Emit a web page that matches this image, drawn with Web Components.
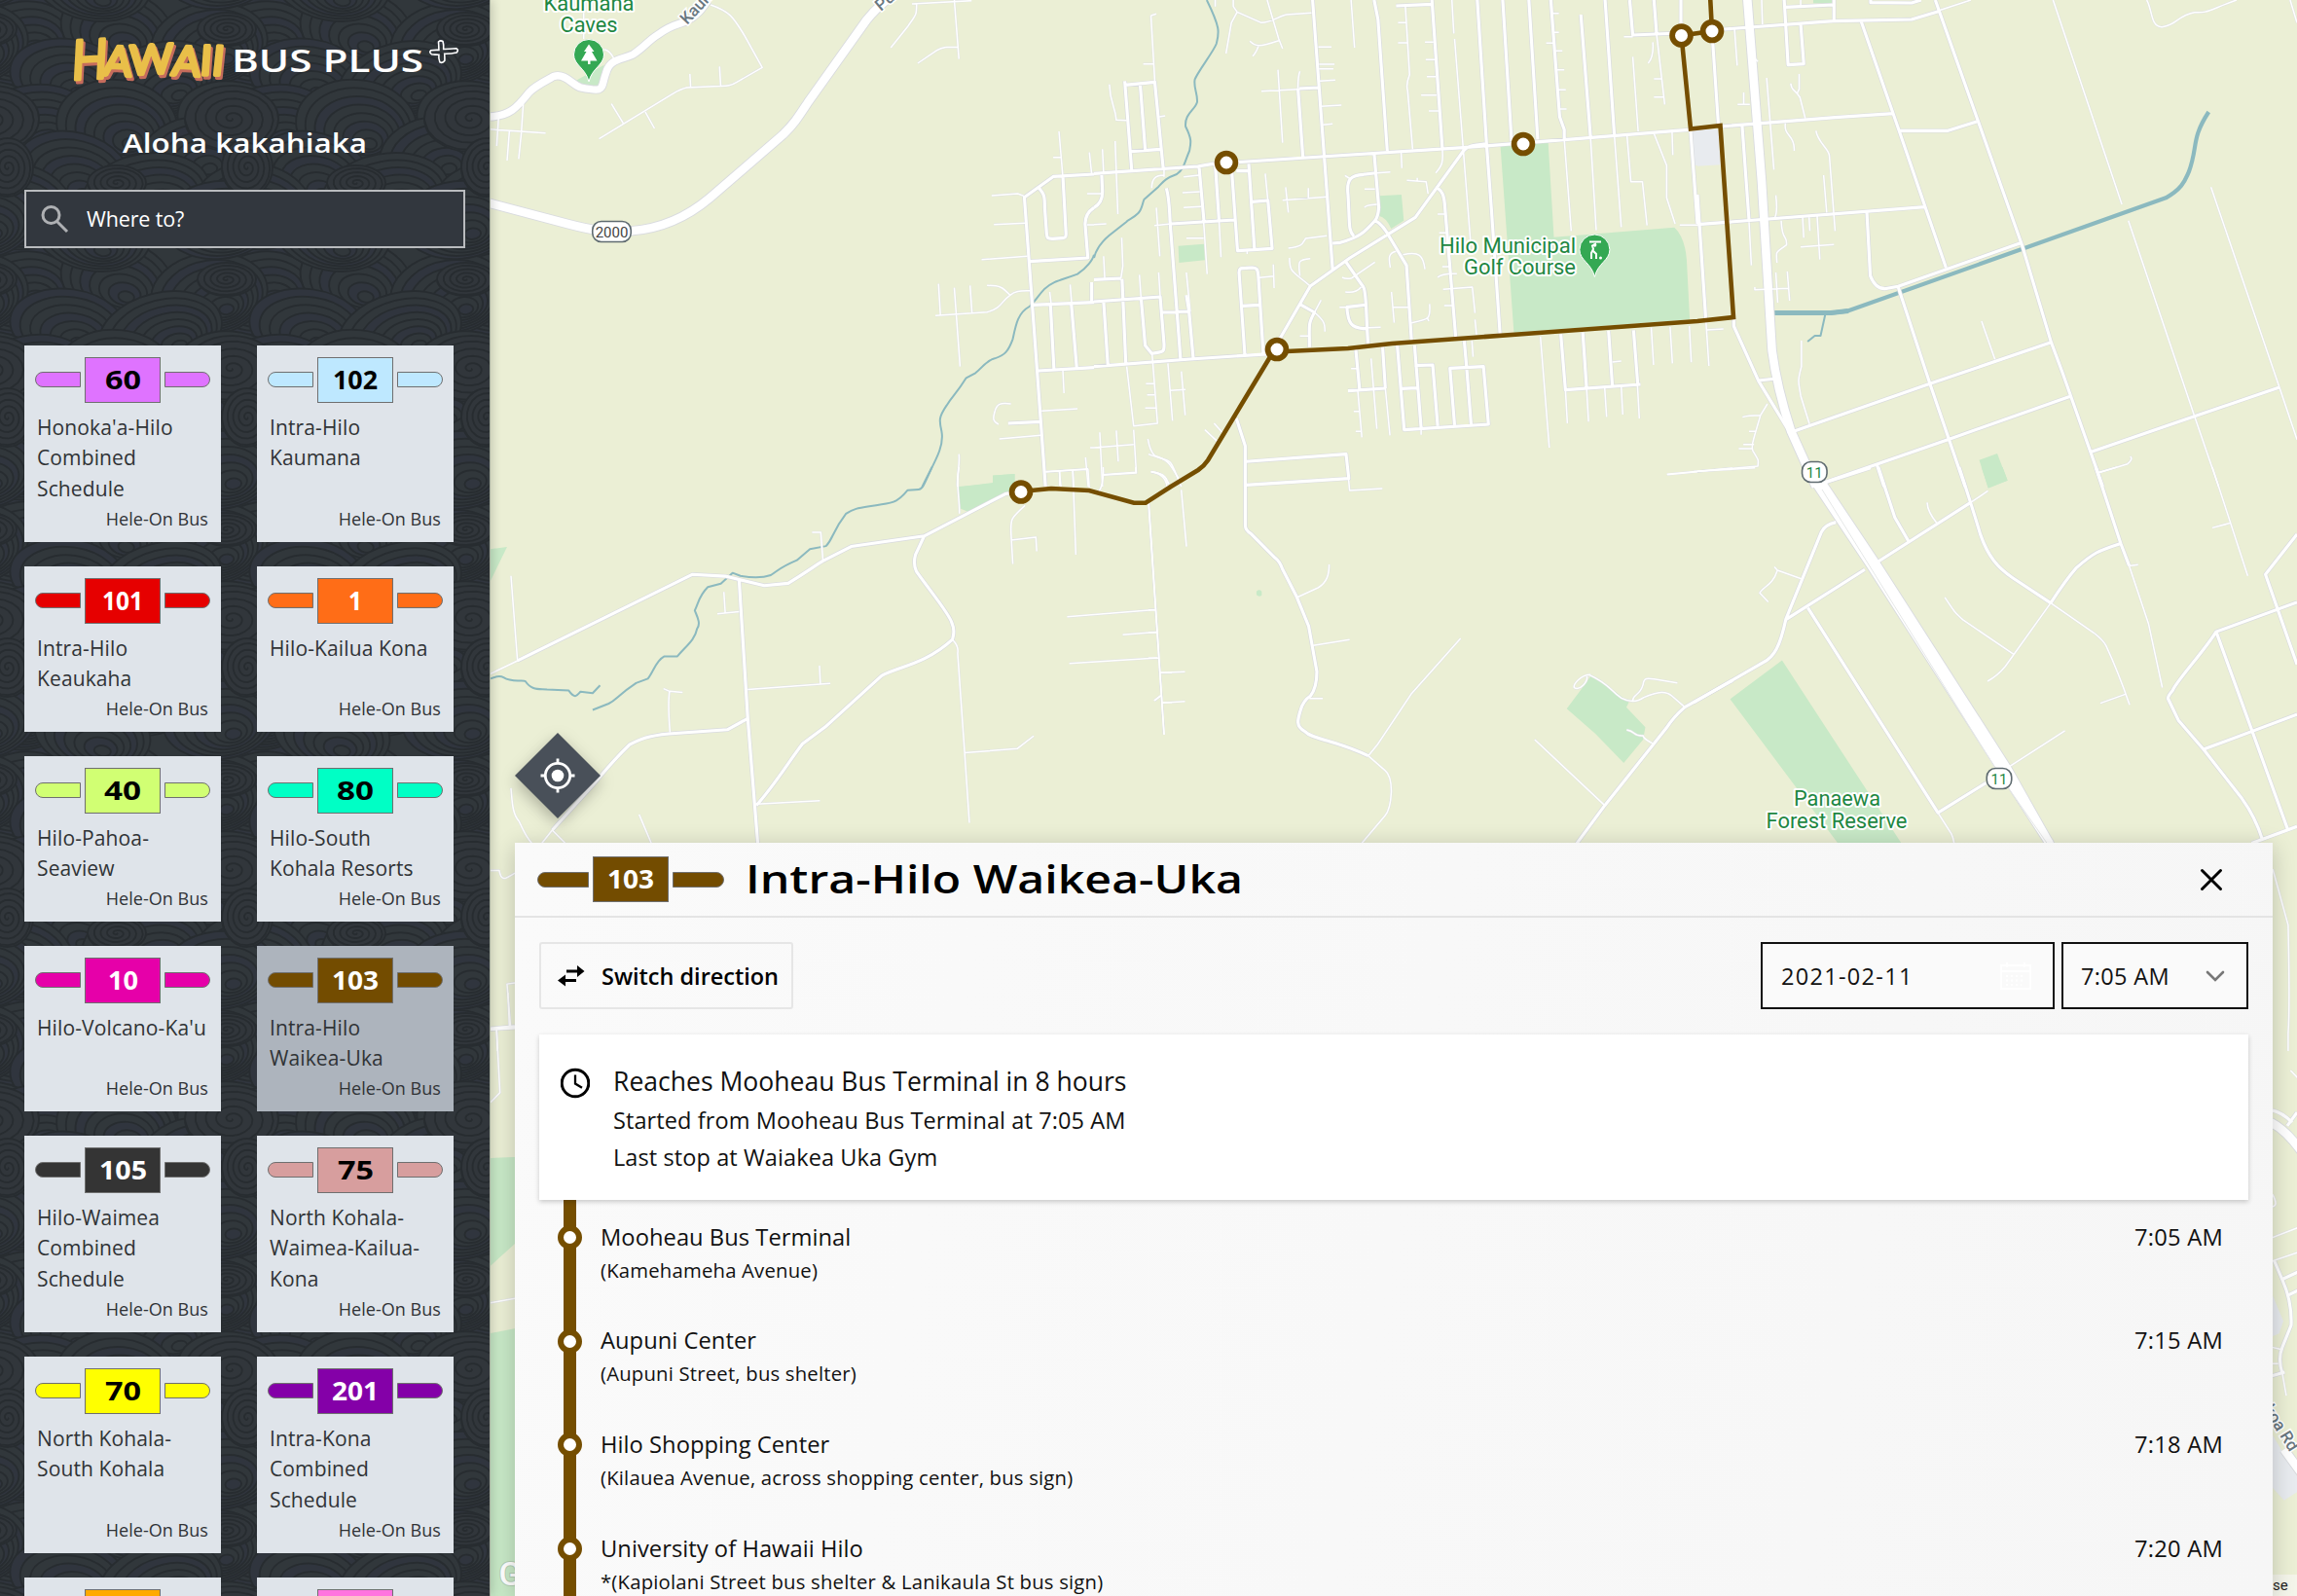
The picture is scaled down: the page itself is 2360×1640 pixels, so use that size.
<!DOCTYPE html>
<html lang="en">
<head>
<meta charset="utf-8">
<title>Hawaii Bus Plus</title>
<style>
html,body{margin:0;height:1640px;overflow:hidden}
body{font-family:"Open Sans","Noto Sans",sans-serif;color:#111}
</style>
</head>
<body>
<bus-app></bus-app>
<script>
const define=(name,render)=>customElements.define(name,class extends HTMLElement{
  connectedCallback(){
    if(this.shadowRoot)return;
    this.attachShadow({mode:'open'}).innerHTML=render(this);
  }
});
const attr=(el,n,d='')=>el.getAttribute(n)??d;

/* Display lettering: a text run widened to a given advance. The box is its cap height. */
define('wide-text',el=>{
  const s=+attr(el,'size',26),w=+attr(el,'w',100),h=(s*.714).toFixed(1);
  return `<style>:host{display:block;line-height:0;flex:none}svg{display:block;overflow:visible}</style>
  <svg width="${w}" height="${h}"><text x="0" y="${h}" textLength="${w}" lengthAdjust="spacingAndGlyphs" font-family="Open Sans,Noto Sans,sans-serif" font-size="${s}" font-weight="${attr(el,'weight','650')}" fill="currentColor">${attr(el,'text')}</text></svg>`;
});

define('route-badge',el=>`
<style>
:host{display:flex;align-items:center;gap:4px;color:${attr(el,'ink','#fff')}}
i{flex:1;box-sizing:border-box;height:16px;background:${attr(el,'color')};border:1.5px solid #6f6f6f}
i:first-of-type{border-radius:8px 0 0 8px}
i:last-of-type{border-radius:0 8px 8px 0}
b{box-sizing:border-box;width:78px;height:47px;background:${attr(el,'color')};border:1.5px solid #6f6f6f;display:flex;align-items:center;justify-content:center}
</style><i></i><b>${attr(el,'num')?`<wide-text text="${attr(el,'num')}" w="${attr(el,'w')}" size="27" weight="700"></wide-text>`:''}</b><i></i>`);

define('route-card',el=>`
<style>
:host{box-sizing:border-box;display:flex;flex-direction:column;padding:12px 11px 11px;background:${el.hasAttribute('active')?'#adb4bd':'#dfe4ea'};color:#303336}
.name{margin:10px 0 0 2px;font-size:21px;line-height:31.35px;white-space:nowrap;letter-spacing:.12px}
.agency{margin:auto 2px 0 0;text-align:right;font-size:18px;line-height:26px;letter-spacing:.05px}
</style>
<route-badge color="${attr(el,'color')}" ink="${attr(el,'ink','#fff')}" num="${attr(el,'num')}" w="${attr(el,'w')}"></route-badge>
<div class="name"><slot></slot></div><div class="agency">Hele-On Bus</div>`);

/* Seamless wave pattern built from overlapping ringed humps. */
function waves(){
  const W=246,H=257,humps=[
    [20,40,62,46,-10,8],[120,30,58,40,12,7],[215,45,60,42,-8,8],[70,78,60,38,8,7],[165,84,64,40,-14,8],
    [240,124,58,40,10,7],[30,132,66,44,-12,8],[120,128,62,46,6,8],[200,160,56,40,-8,7],[75,178,60,42,14,8],
    [150,200,66,42,-10,8],[15,212,60,44,8,8],[225,226,58,40,-6,7],[95,240,60,38,10,7]];
  const spirals=[[233,30,30,17],[238,122,48,34],[8,172,26,30],[120,188,30,18]];
  let out='';
  const put=(x,y,f)=>{for(const dx of[-W,0,W])for(const dy of[-H,0,H])out+=`<g transform="translate(${x+dx} ${y+dy})">${f}</g>`};
  humps.forEach(([x,y,a,b,r,n],k)=>{
    let f='';
    for(let i=0;i<n;i++){const q=1-i/n;f+=`<ellipse cx="${(i*2.2).toFixed(1)}" cy="${(i*2.6).toFixed(1)}" rx="${(a*q).toFixed(1)}" ry="${(b*q).toFixed(1)}" fill="${(i+k)%3?'#31373b':'#30353e'}"/>`}
    put(x,y,`<g transform="rotate(${r})">${f}</g>`);
  });
  spirals.forEach(([x,y,a,b])=>{
    let d='M0 0';
    for(let t=.3;t<Math.PI*9;t+=.3){const q=t/(Math.PI*9);d+=`L${(a*q*Math.cos(t)).toFixed(1)} ${(b*q*Math.sin(t)).toFixed(1)}`}
    put(x,y,`<ellipse rx="${a}" ry="${b}" fill="#31363b"/><path d="${d}" fill="none"/>`);
  });
  return `<svg class="bg" width="503" height="1640"><defs><pattern id="w" width="${W}" height="${H}" patternUnits="userSpaceOnUse"><rect width="${W}" height="${H}" fill="#31373b"/><g stroke="#272c30" stroke-width="2">${out}</g></pattern></defs><rect width="503" height="1640" fill="url(#w)"/></svg>`;
}

define('bus-logo',()=>`
<style>:host{display:block;height:60px}svg{display:block;overflow:visible}.brush{filter:drop-shadow(2px 3px 0 #c66c5c)}</style>
<svg width="503" height="60" viewBox="0 33 503 60">
<g class="brush" font-family="Lato,Open Sans,sans-serif" font-weight="400" fill="#e9bf49" stroke="#e9bf49" stroke-width="3.600" stroke-linejoin="round" stroke-linecap="round"><text transform="translate(73 82) rotate(-3) skewX(-6) scale(.86 1)" font-size="56">H</text><text transform="translate(105 77) skewX(-4)" font-size="42" textLength="124" lengthAdjust="spacingAndGlyphs" rotate="3 -3 3 0 2">AWAII</text></g>
<text x="238" y="74" font-family="Open Sans,Noto Sans,sans-serif" font-size="32" font-weight="650" fill="#fff" textLength="197" lengthAdjust="spacingAndGlyphs">BUS PLUS</text>
<path d="M450.500 43q2-2 4.500-.5q1 3 .7 8q6 0 13-.8q3 1.500.5 4.300q-6 1.500-12.500 1.300q.3 4 .2 7q-2 3-5 1.500q-1.500-3-1-7.600q-4 0-7.500-.5q-3-2-.5-4q4-.5 8-.3q0-4-.4-8.400z" fill="none" stroke="#fff" stroke-width="1.600"/>
</svg>`);

const routes=[
["60","#df73ff","#000",37,"Honoka'a-Hilo<br>Combined<br>Schedule"],
["102","#bee8ff","#000",46,"Intra-Hilo<br>Kaumana"],
["101","#e60000","#fff",42,"Intra-Hilo<br>Keaukaha"],
["1","#ff6d17","#fff",14,"Hilo-Kailua Kona"],
["40","#d1ff73","#000",38,"Hilo-Pahoa-<br>Seaview"],
["80","#00ffc5","#000",38,"Hilo-South<br>Kohala Resorts"],
["10","#e600a9","#fff",31,"Hilo-Volcano-Ka'u"],
["103","#734c00","#fff",48,"Intra-Hilo<br>Waikea-Uka"],
["105","#343434","#fff",49,"Hilo-Waimea<br>Combined<br>Schedule"],
["75","#d79e9e","#000",37,"North Kohala-<br>Waimea-Kailua-<br>Kona"],
["70","#ffff00","#000",37,"North Kohala-<br>South Kohala"],
["201","#8400a8","#fff",48,"Intra-Kona<br>Combined<br>Schedule"],
["","#ffaa00","#000",0,""],["","#ff73df","#000",0,""]];

define('side-bar',()=>`
<style>
:host{display:grid;height:1640px;overflow:hidden;background:#31373b;box-shadow:1px 0 0 #a9b1a0,2px 0 10px #0003;z-index:2}
.bg,.col{grid-area:1/1}
.col{display:flex;flex-direction:column;padding-top:33px}
.hi{display:flex;justify-content:center;color:#fff;padding:45px 0 37.700px}
.search{box-sizing:border-box;margin:0 25px 100px;width:453px;height:60px;flex:none;border:2px solid #b9bbbe;background:#32373e;color:#fff;display:flex;align-items:center;padding-left:14px;gap:18px;font-size:21.500px;letter-spacing:-.15px}
.grid{display:grid;grid-template-columns:202px 202px;grid-template-rows:202px 170px 170px 170px 202px 202px 170px;column-gap:37px;row-gap:25px;padding-left:25px}
.search svg{display:block}
</style>${waves()}
<div class="col"><bus-logo></bus-logo>
<div class="hi"><wide-text text="Aloha kakahiaka" w="251" size="27"></wide-text></div>
<div class="search"><svg width="30" height="30" viewBox="0 0 30 30" fill="none" stroke="#aeb0b3" stroke-width="3"><circle cx="11.500" cy="11" r="8.500"/><path d="M17.500 17.500L28 28"/></svg><span>Where to?</span></div>
<div class="grid">${routes.map(r=>`<route-card num="${r[0]}" color="${r[1]}" ink="${r[2]}" w="${r[3]}" ${r[0]=='103'?'active':''}>${r[4]}</route-card>`).join('')}</div></div>`);

/* Map tiles: each has its own origin and unit scale; s = lanes, m = streets, l = main roads, h = highways, r = rivers. */
const tiles=[
{t:'translate(504 0) scale(.39541 .33333)',
 p:'M220 250L295 200L290 268L245 270ZM1228 1500L1305 1488V1466L1362 1461V1500Z',
 l:'M-10 360C50 360 70 330 100 285C115 265 150 245 165 235C195 225 215 265 235 270C300 285 285 275 300 225C310 180 340 185 370 168C400 145 410 125 435 107C470 75 490 75 510 65C540 45 550 25 565 0',
 h:'M-10 624L200 690C270 712 310 718 365 712C450 705 520 660 570 610L760 415C790 380 800 360 825 315L975 65C985 50 1000 25 1050 -20',
 m:'M1568 537L1463 544L1387 608L1420 1140L1442 1500M1423 577C1440 600 1440 605 1440 640L1445 720C1446 735 1448 736 1460 736L1485 734C1495 733 1496 730 1495 715L1487 542M1400 806L1552 795L1545 690C1545 665 1555 650 1568 640M1408 940L1568 932M1455 940L1464 1138M1509 936L1523 1133M1423 1143L1568 1133M1345 1305L1430 1300M1562 930V870',
 s:'M572 15C620 35 630 50 660 110L706 208L640 253C620 268 610 264 580 266L510 270C490 275 480 285 465 295L282 428M518 228L520 270M595 205L598 264M314 320L346 382M402 345L426 396M295 152Q310 155 320 180M242 40V120M1095 12L1250 2M1107 12C1107 50 1105 45 1085 80L1040 147M1205 0L1217 182M1215 145C1180 145 1175 145 1160 155L1110 195M-10 398L50 403L143 410M21 360L16 450M85 320L80 410L73 490M49 403L43 495M1477 405L1487 545M1462 485H1483M1556 470L1562 537M1302 603L1370 597L1387 605M1308 692L1390 688M1276 800L1395 790M1164 875L1169 973M1205 887L1220 1130M1246 880L1251 965M1156 973L1290 962C1330 950 1325 930 1350 910C1365 895 1380 897 1403 896M1290 880C1325 880 1330 885 1350 910M1453 900L1457 940M1506 877L1510 935M1487 1140L1490 1212M1352 1245C1325 1240 1315 1245 1310 1270C1305 1290 1305 1300 1320 1308M1432 1267L1525 1260M1322 1353L1430 1342M1442 1455L1553 1445M1478 1453L1482 1500M1513 1450L1515 1500M1546 1410L1553 1500M1217 1400C1220 1430 1212 1460 1213 1500M1550 597H1568M1550 693H1568M1558 1380H1568',
 r:'M1568 785C1565 800 1550 825 1525 845C1480 865 1465 865 1440 890C1420 915 1415 930 1400 945C1370 965 1365 1000 1357 1045C1345 1085 1335 1095 1310 1105C1290 1110 1280 1130 1260 1150L1236 1165C1210 1215 1200 1220 1185 1250C1165 1285 1165 1295 1172 1330C1180 1380 1150 1430 1122 1500'},
{t:'translate(1124 0) scale(.39541 .33333)',
 p:'M1056 449L1180 436L1195 731L1508 701Q1535 730 1540 800L1548 985L1091 1025ZM740 604L799 600L805 680L772 705Q760 670 740 665ZM219 758L286 752L288 802L221 810Z',
 g:'M1553 400H1568V510H1558Z',
 m:'M0 535L270 513C290 508 310 503 345 502L590 483L960 455L1230 430L1568 398M0 1130L250 1107L470 1090M480 1050L562 882L665 795L835 670L960 465C970 450 985 448 1020 443M568 0L620 830M728 0L738 60L762 465M878 0L905 455M996 0L1020 443L1033 650L1055 1030M1062 0L1085 435M1130 0L1153 430M1328 0L1352 415M1265 45L1290 420M1187 0L1210 360L1222 400V430M1392 0L1400 108L1520 102M1455 0L1462 107M1525 0V90M1550 400L1568 690M80 262L158 253L180 520M80 250L98 525M95 467L173 460M120 260L133 462M530 272L543 485M533 273L583 270M785 18L878 13M200 690L365 678M273 513L286 685M315 505L325 682M357 510L373 773L463 766L452 618L411 622M402 505L417 770M370 527L402 526M728 472L740 640Q738 670 730 680C700 720 690 730 640 748L620 750M675 728C660 710 665 690 660 600C655 550 670 540 700 538L733 533M730 680C750 690 760 715 770 735L812 818L825 1050M890 577C905 590 910 600 912 640L940 1040M655 808L700 885C708 900 706 950 712 1060M655 947L706 940M657 945C660 1000 670 1010 700 1013L712 1012M535 938L573 963C555 1000 560 1005 560 1070M392 1095L377 840C377 828 380 826 395 826L410 825C425 826 425 830 427 850L440 1090M386 943L430 940M188 580C198 620 195 660 200 720L225 1110M0 930L172 915L182 1060C183 1085 182 1085 150 1090L133 1065L122 915M25 930L36 1125M73 860L83 1128M0 862L70 858M177 963L247 960L258 1105M247 960L240 910M680 1075L690 1200M660 1205L757 1197M750 1070L757 1197M788 1065L806 1325L1025 1308L1012 1130L925 1135L937 1310M833 1065L850 1320M833 1127L880 1125L893 1313M800 1198L838 1196M962 1050L968 1130L980 1310M1213 1030L1225 1202L1420 1185M1270 1025L1280 1198M1337 1020L1347 1190M1402 1018L1413 1185M370 1290L393 1375V1500M395 1423L655 1400L662 1475L395 1495M395 1498V1500M20 540L22 590Q22 625 0 640',
 s:'M148 48L158 250M148 48L162 43M128 197H156M40 260C42 320 55 325 58 370L85 371M55 435L62 660M22 460L25 535M182 520V545M150 580C150 550 160 540 182 540M72 733L75 820L70 858M25 790L28 860M118 847L122 915M168 840L172 915M240 840L250 960M362 0V20L372 37L357 70L343 165M372 37L435 70C460 70 480 50 500 45L565 40M450 0L480 120L490 150M480 125C430 145 420 145 405 127M427 143Q420 165 412 173M583 145H617M585 198H625M585 212H622M587 250L627 247M590 328L643 324M595 385L620 382M435 281L530 275M478 215L490 440M535 220Q530 235 530 272M668 0L677 147M809 18L820 230Q810 260 815 280L828 460M790 70H812M790 132H815M860 130H882M862 184H885M865 236H888M850 293H890M870 342H895M930 0L935 103M937 120L978 740M1190 41H1208M1195 100H1208M1175 133H1195M1200 157H1217M1203 215H1222M1205 277H1226M1210 336H1228M1400 175L1414 405M1377 113H1400M1462 107L1483 322M1452 130Q1455 175 1440 195M1455 243H1477M1455 299H1480M1385 418L1395 560H1425L1437 695M1455 412L1488 510V610L1510 690M1502 405L1504 478M1222 430L1240 712M1290 420L1305 710M1352 415L1370 700M1522 694H1568M1490 1463L1568 1454M490 617L605 607M498 577L505 655M557 580V612M445 535L452 620M157 695L200 690M162 640L171 790M285 685L294 845M325 682L330 793M233 545L273 540M230 594L275 591M233 640L278 637M240 734H285M430 856L468 851M466 815L468 888M505 765C540 760 540 755 550 735L605 727M508 795C508 840 515 835 562 882M562 797C530 800 530 805 535 850M730 808L670 857Q655 862 645 855M694 885Q680 905 653 900M638 947H657M712 1010L745 1009M703 583H730M703 640Q705 632 735 630M652 541L667 552M735 533L770 530M798 467L800 518M905 458C908 500 905 510 888 533M813 556L863 560L868 597M840 548V560M893 660H912M897 718H915M893 855Q905 842 943 844M905 822H925M907 892L983 885L990 965M910 942H932M990 985L994 1032M770 825C765 795 765 780 785 775M803 785C845 775 855 785 860 830M778 947H820M773 900L780 995M825 995C870 985 875 985 872 937M866 980L870 990M590 925L573 963C600 990 600 1000 600 1022M535 1036H560M151 1090L165 1305L103 1313L85 1130M135 1183H155M138 1217H157M133 1258H162M192 1120L204 1297M227 1145L237 1280M197 1204L238 1201M668 1136H683M685 1200L696 1348M675 1268H690M680 1330H693M720 1105L735 1322M757 1197L769 1342M850 1320V1340M982 1050L985 1100M1160 1038L1183 1380M1225 1202L1230 1305M1280 1198L1285 1300M1327 1195L1332 1285M1370 1192L1374 1278M1412 1185L1417 1290M1347 1116L1370 1113M1448 1010L1454 1125M1497 1008L1503 1120M1547 1005L1552 1117M0 1380L103 1370M58 1327L63 1423M15 1333L22 1500M103 1325L110 1458L22 1465M140 1353Q145 1390 158 1405C200 1420 200 1440 220 1475M148 1455Q185 1460 190 1500M312 1305L335 1335M288 1325L320 1360M170 360L185 357M0 597H20M0 692L32 690M398 772V783M315 0V20',
 r:'M293 0C330 90 325 100 318 135C310 160 270 220 262 245C258 270 270 290 268 315C262 340 235 350 238 390C255 430 252 440 248 465C235 500 235 520 215 537C185 550 180 560 168 575L130 615C125 630 125 645 115 657C100 675 90 675 85 683L40 725C15 750 5 770 0 795'},
{t:'translate(1744 0) scale(.39286 .33333)',
 p:'M303 0H353V10H303ZM737 1418L784 1398L811 1481L760 1504Z',g:'M0 400L55 398L60 508L0 512Z',
 h:'M130 -10L168 560L195 1080C205 1170 220 1240 245 1330L310 1500',
 m:'M70 90L355 65L560 60L630 35M622 0L850 760L925 1055L955 1150L1060 1500M428 65L528 405L650 825M40 130L55 390M60 390L360 362L512 350M528 403H655L730 375M0 692L595 638M443 655L452 850Q465 890 490 890L525 883L843 750M525 885L608 1183L700 1500M255 1328L608 1183L925 1055M330 1488L655 1355L975 1222M1030 1393L1300 1283L1522 1194M470 1435L488 1500M0 600L22 985M95 985V1005L160 1175L240 1330M160 1173L200 1168M117 388L135 680M227 0L237 200L278 197L270 75M230 22L353 15M357 0V65M453 0V8L560 9L585 0',
 s:'M630 33L715 0M930 0L1110 630M1127 680L1300 1283L1363 1500M1343 577L1522 1194L1568 1355M1175 0C1190 30 1185 85 1215 83C1260 75 1250 50 1300 38C1335 40 1330 35 1410 0M1550 0L1568 70M168 0L170 75M97 90L104 202M181 240L200 523M244 257C245 280 255 275 268 300L282 365M266 228V275L260 290M230 380C225 420 255 415 253 465M310 403C315 440 345 460 345 480L360 712M330 540L338 655M205 602Q210 650 203 670M219 680C222 750 235 720 233 755C205 780 205 770 208 810M135 685L141 818M150 885V893L237 889M235 837L241 927M205 840L210 933M275 670L278 733M292 670L294 712M313 665L320 800M270 761L357 754M105 322H137M121 285V320M150 180L158 190M743 990L778 1108M272 1050V1130C260 1180 265 1180 270 1220L293 1307M22 985L30 1128M25 1017L68 1014M183 1245L165 1280C145 1360 140 1375 145 1390C160 1420 160 1415 158 1437L0 1453M118 1286Q130 1280 165 1280M135 1330H153M120 1370H148M108 1383H145M1050 1457L1125 1430Q1140 1415 1132 1407M270 0V18',
 R:'M202 965H350L395 958L1225 610C1270 580 1275 555 1285 530C1310 450 1290 430 1337 345',r:'M335 965L322 1035H307L288 1053'},
{t:'translate(504 480) scale(.44643 .38265)',
 p:'M0 220L38 214L0 305ZM1077 52L1156 44V22L1206 18V66L1100 120L1078 110Z',
 m:'M62 520L465 288L540 293L630 318L685 312C730 280 740 270 765 252L830 213L998 185L1185 72L1205 68M998 185L978 235Q972 260 980 280C1010 330 1060 400 1062 420C1070 440 1065 450 1063 463C1000 530 940 535 900 560L770 698L718 743C690 785 650 860 612 908M572 303L592 675L615 1010M592 675L545 705L410 716C360 722 345 730 320 745C280 790 260 820 240 848L142 975M0 1508L56 1502',
 s:'M0 555L62 520L47 292M765 250L760 175H740M537 335L540 390M522 394L572 388M592 597L782 581M757 533L759 581M398 595L412 602L442 605M412 602C408 630 410 670 413 712M612 905L758 896M1063 463Q1078 480 1075 500L1091 765L1102 955M1091 767L1212 756L1250 722M1078 0C1070 50 1080 80 1079 125M1230 103C1195 140 1197 140 1198 180L1202 260M1198 196L1255 188L1257 226M1340 10L1347 235M1515 100L1550 718M1327 402L1530 383M1455 450L1532 443M1332 527L1535 512M142 975L118 1010M142 975L172 1010M47 862C50 900 50 930 65 950C80 985 80 990 95 1010M342 933L370 1010M0 1083H20C25 1120 40 1100 56 1090M56 1385L38 1388L46 1502M14 1508L16 1568M1278 12L1375 6L1378 55M1410 0Q1412 45 1400 65M1410 20L1485 14V0M1520 12Q1560 20 1557 45M1310 10V50M1540 552H1568M1545 632H1568M1528 627L1545 612',
 r:'M1016 0C1000 40 995 60 985 60L960 62C940 90 930 95 900 100C850 110 840 108 818 125C785 175 790 190 772 212L735 220L705 250C665 270 665 275 645 290C620 300 590 295 575 292L557 284L530 313L500 322C480 345 480 360 470 385C475 400 485 420 475 435C470 465 450 480 430 508H400C380 520 375 550 362 568L335 580C290 615 290 625 272 635L235 652M0 568Q20 558 30 565C50 580 75 570 80 575C95 600 110 595 130 597L180 600C195 625 200 612 207 603L235 607L252 586'},
{t:'translate(1180 400) scale(.38265 .33333)',
 p:'M1187 885L1240 920L1290 965L1283 980L1334 1042L1328 1080L1276 1152L1200 1062L1123 985L1165 920ZM290 623Q297 615 304 623V635Q297 642 290 634Z',
 m:'M260 290V420Q260 435 275 445L340 520Q352 530 360 555L398 640L430 730L452 870Q452 920 435 945Q415 960 408 990C400 1020 395 1040 420 1055C440 1080 500 1080 590 1130M1568 898L1440 980Q1410 1010 1390 1045L1225 1283L1150 1400',
 s:'M0 350L42 1065M537 275L540 312L628 306M398 642L455 612C480 595 485 570 485 540M442 790L540 772M432 953H468M590 1130L615 1095L705 940L838 768M590 1130L635 1175Q652 1190 652 1240Q650 1295 635 1315L572 1400M1037 1080L1225 1283M1392 262L1568 243M88 310L102 485M0 200Q10 205 40 215C65 220 65 240 88 300M8 255C45 260 45 270 55 292M32 874L98 871M37 967L98 962M15 960L34 943M0 680H18M0 750H22M0 829H26M1187 880C1160 880 1140 910 1143 920C1160 930 1180 900 1177 885M1183 880C1240 910 1240 930 1270 952C1300 970 1320 958 1330 950C1370 930 1390 930 1405 945L1440 980M1300 960C1300 940 1320 945 1328 910C1330 885 1345 892 1365 895L1420 905M1284 1050C1310 1055 1300 1070 1328 1068C1330 1080 1345 1085 1353 1092'},
{t:'translate(1740 480) scale(.39541 .38265)',
 p:'M95 623L230 519L540 1010H375ZM748 0H803L816 36L766 57Z',
 h:'M310 30L460 262L800 810L925 1010M325 30L475 262L815 810L935 1030',
 m:'M340 42L460 2M480 0L523 135L558 198M690 0C720 95 735 145 745 180C765 240 790 270 830 298L928 365M720 95L470 260M445 275L242 408M370 148Q340 155 332 175L240 408C225 480 210 510 180 525L0 632M297 378L635 928L760 848M1045 0L1110 205L1132 265M1110 205C1050 225 1040 230 995 270C970 300 950 330 928 365M1568 363L1358 442C1330 490 1250 580 1245 600Q1232 615 1233 622L1260 680L1325 758L1425 890Q1460 940 1478 1000M1568 180L1486 288L1568 530M1358 442L1543 970M1325 758L1568 664M1450 1010L1568 965',
 s:'M0 12L160 2M720 95L765 64M607 95Q608 120 632 150M653 350C685 400 680 390 700 410L832 503M928 365L810 535Q790 560 764 575M928 365L1040 445Q1065 465 1072 480C1090 520 1110 570 1133 638M1057 634L1122 610M1132 265L1182 420L1218 592M1132 265L1155 262M1050 15L1100 0M1348 0L1440 292M1348 163L1395 150M815 808L965 708M635 928L670 985Q675 995 677 1010M280 300L218 277C205 320 180 320 172 338L194 362M210 268L218 277M1505 1080L1545 1230C1548 1380 1550 1450 1545 1520V1568'},
{t:'translate(2100 1100) scale(.33333 .34439)',
 g:'M700 660L738 748L725 785L700 795ZM700 1080L780 1210V1258L740 1283L700 1240Z',
 h:'M700 155Q750 180 800 250M740 1130L800 1210',
 m:'M700 118Q735 125 765 155M750 165L780 125M710 568L735 625Q765 690 762 760L735 825Q720 860 735 905M730 625L785 600M750 672L785 655M700 912L742 900',
 s:'M705 370C720 400 715 405 700 408M700 500L785 468M700 570L785 542M700 825L730 832M700 875H722M735 905L747 970M760 0L790 30'},
{t:'translate(504 1020) scale(.5102 .39541)',
 p:'M0 430L60 427V640L0 710ZM0 885L60 870V1600H0Z',m:'M0 95L60 90',
 s:'M35 0L38 90M12 95L19 260L0 285M0 806L60 792'}];

define('city-map',()=>{
  const draw=(k,c,w)=>tiles.filter(t=>t[k]).map(t=>`<path transform="${t.t}" d="${t[k]}" vector-effect="non-scaling-stroke" ${w?`fill="none" stroke="${c}" stroke-width="${w}" stroke-linejoin="round"`:`fill="${c}"`}/>`).join('');
  const stops=[[1049,505.500],[1312,359],[1260,167],[1565,148],[1727.500,36.500],[1759,32]];
  const pin=(x,y)=>`<path d="M${x} ${y+28}C${x-3} ${y+14} ${x-15.500} ${y+11} ${x-15.500} ${y}a15.500 15.500 0 0 1 31 0C${x+15.500} ${y+11} ${x+3} ${y+14} ${x} ${y+28}z" fill="#34a853" stroke="#fff" stroke-width="1"/>`;
  const label=(s,x,y,w)=>`<text x="${x}" y="${y}" textLength="${w}" lengthAdjust="spacingAndGlyphs">${s}</text>`;
  const shield=(s,x,y,w,c)=>`<rect x="${x-w/2}" y="${y-10.500}" width="${w}" height="21" rx="9" fill="#fff" stroke="#5f6b70" stroke-width="1.600"/><text x="${x}" y="${y+5.500}" text-anchor="middle" font-size="15" fill="${c}">${s}</text>`;
  return `<style>:host{display:block}svg{display:block}</style>
  <svg width="1857" height="1640" viewBox="503 0 1857 1640"><rect x="503" width="1857" height="1640" fill="#ebefd5"/>
  ${draw('p','#c8e9c7')}${draw('g','#e8ebef')}
  ${draw('r','#8bb9bf',2)}${draw('R','#8bb9bf',4.200)}<path d="M1823 321.500H1881L1899 319.500" stroke="#8bb9bf" stroke-width="5" fill="none"/>
  ${draw('s','#dfe1e4',2.400)}${draw('m','#d9dbdf',4.400)}${draw('l','#d9dbdf',9.200)}${draw('h','#d9dbdf',10.400)}
  ${draw('s','#fff',1.500)}${draw('m','#fff',3.100)}${draw('l','#fff',7.400)}${draw('h','#fff',8.600)}
  <path d="M1872 503L2056 799L2107 872" stroke="#e6e8e8" stroke-width="1" fill="none"/>
  <path d="M1049 505L1080 502L1119 504L1165 516.700H1177L1203 500L1231 483Q1237 479 1241 473L1306 365L1312 359L1322 361L1385 358L1430 353L1567 343L1744 330L1781 326L1767.500 129L1737 132.500L1727.500 36.500L1759 32L1757 -5" fill="none" stroke="#754e00" stroke-width="4.600"/>
  ${stops.map(p=>`<circle cx="${p[0]}" cy="${p[1]}" r="9.400" fill="#fff" stroke="#754e00" stroke-width="5.800"/>`).join('')}
  ${pin(605,56)}<path d="M605 45.500l5.500 7.500h-2.500l5.500 9.500h-7v3.500h-2.500v-3.500h-7l5.500-9.500h-2.500z" fill="#fff"/>
  ${pin(1638.400,256.500)}<g stroke="#fff" stroke-width="2" fill="none"><path d="M1633 248.500h12M1635 266v-6l2-4-1-3.500 4-2M1636 257l4 4v5"/></g><circle cx="1638.500" cy="252" r="1.800" fill="#fff"/><circle cx="1644.500" cy="265" r="1.500" fill="#fff"/>
  <g font-family="Roboto,sans-serif" font-size="21.500" fill="#1e8742" stroke="#fff" stroke-width="4" stroke-linejoin="round" paint-order="stroke">
  ${label('Kaumana',558.500,10.500,93)}${label('Caves',575.500,33,59)}${label('Hilo Municipal',1479,260,140)}${label('Golf Course',1504,282,115)}${label('Panaewa',1843,828,89)}${label('Forest Reserve',1814.500,850.500,145)}</g>
  <g font-family="Roboto,sans-serif" font-size="17" font-weight="500" fill="#69777f" stroke="#fff" stroke-width="3" paint-order="stroke"><text transform="translate(706 26) rotate(-47)">Kaun</text><text transform="translate(905 12) rotate(-40)">Pu</text><text transform="translate(2325 1448) rotate(58)">koa Rd</text></g>
  <g font-family="Roboto,sans-serif">${shield('2000',628.500,238,39.500,'#444')}${shield('11',1864.300,485,25.500,'#1e8742')}${shield('11',2054,800,25.500,'#1e8742')}</g>
  <text x="512.500" y="1629" font-family="Roboto,sans-serif" font-size="34" font-weight="500" fill="#fff" stroke="#8c9a8c" stroke-opacity=".35" stroke-width="2" paint-order="stroke">G</text>
  <rect x="2330" y="1618" width="30" height="22" fill="#f4f5ea"/><text x="2335" y="1634" font-family="Roboto,sans-serif" font-size="15" fill="#222">se</text>
  </svg>`;
});

define('locate-button',()=>`
<style>:host{display:block;width:88px;height:88px;filter:drop-shadow(0 6px 8px #0004)}</style>
<svg width="88" height="88" viewBox="-44 -44 88 88"><path d="M0-44L44 0L0 44L-44 0z" fill="#495059"/><g fill="none" stroke="#fff" stroke-width="2.800"><circle r="12.700"/><path d="M0-17.500v5M0 17.500v-5M-17.500 0h5M17.500 0h-5"/></g><circle r="6.300" fill="#fff"/></svg>`);

define('stop-row',el=>`
<style>
:host{display:grid;grid-template-columns:63px 1fr auto;height:106.700px;padding-right:26px;font-size:23.700px;line-height:34px}
.rail{width:12.500px;margin-left:25px;background:#754e00;display:flex;justify-content:center;box-sizing:border-box;padding-top:26px}
.rail i{flex:none;box-sizing:border-box;width:25px;height:25px;border:6px solid #754e00;border-radius:50%;background:#fff}
.text{padding-top:20.500px}small{display:block;font-size:20.300px;line-height:35px;letter-spacing:.2px}
.n{letter-spacing:.05px}.t{letter-spacing:.25px}
</style>
<div class="rail"><i></i></div><div class="text"><span class="n">${attr(el,'name')}</span><small><slot></slot></small></div><div class="text t">${attr(el,'time')}</div>`);

define('route-panel',()=>`
<style>
:host{display:block;box-sizing:border-box;background:linear-gradient(100deg,#fafafa,#f6f6f6);box-shadow:0 4px 22px #0003;overflow:hidden;height:774px}
header{display:flex;align-items:center;height:75px;border-bottom:2px solid #e4e4e4;padding:0 51px 0 23px}
header route-badge{width:192px;margin-right:22px}
header svg{margin-left:auto}
header{color:#000}
.tools{display:flex;align-items:stretch;gap:7px;height:69px;padding:25px 25px 26px}
.btn,.box{box-sizing:border-box;display:flex;align-items:center}
.btn{width:261px;border:2px solid #e6e6e6;border-radius:3px;padding-left:16px;gap:16px;font-weight:600;font-size:23.500px;letter-spacing:-.02px;margin-right:auto;color:#000;white-space:nowrap}
.box{border:2px solid #111;background:#fafafa;font-size:23.500px;justify-content:space-between}
.date{width:302px;padding:0 22px 0 19px;letter-spacing:1.300px}.time{width:192px;padding:0 22px 0 18px;letter-spacing:.35px}
.info{box-sizing:border-box;margin:0 25px;height:170px;background:#fff;box-shadow:0 2px 5px #0003;padding:28.500px 0 0 22px;display:flex;gap:24px;position:relative}
.info svg{margin-top:5px}
.info p{margin:0;font-size:23.500px;line-height:38px;letter-spacing:.1px}
.info p:first-child{font-size:26.500px;line-height:38px;letter-spacing:.02px;margin-bottom:2.500px}
.stops{padding:0 25px}
</style>
<header><route-badge color="#734c00" num="103" w="48"></route-badge><wide-text text="Intra-Hilo Waikea-Uka" w="511" size="40" weight="550"></wide-text>
<svg width="24" height="24" viewBox="0 0 24 24" stroke="#000" stroke-width="3" stroke-linecap="round"><path d="M2.500 2.500l19 19M21.500 2.500l-19 19"/></svg></header>
<div class="tools">
<div class="btn"><svg width="30" height="22" viewBox="0 0 30 22" fill="none" stroke="#000" stroke-width="2.800"><path d="M10 6H22M20 15.500H8"/><path d="M21 0L28.500 6L21 12zM9 9.500L1 15.500L9 21.500z" fill="#000" stroke="none"/></svg><span>Switch direction</span></div>
<div class="box date"><span>2021-02-11</span><svg width="32" height="30" viewBox="0 0 32 30" fill="none" stroke="#fff" stroke-width="1.800"><path d="M1 4H31V28H1zM1 10H31M7 1v5M25 1v5"/><path d="M6 15H26M6 19.500H26M6 24H22" stroke-dasharray="2 3"/></svg></div>
<div class="box time"><span>7:05 AM</span><svg width="20" height="12" viewBox="0 0 20 12" fill="none" stroke="#777" stroke-width="2.600" stroke-linecap="round"><path d="M2 2l8 8l8-8"/></svg></div></div>
<div class="info"><svg width="30" height="32" viewBox="0 0 30 32" fill="none" stroke="#000" stroke-width="3"><circle cx="15" cy="16" r="13.800"/><path d="M15 7.500V16.500L22 20.800" stroke-width="2.300"/></svg>
<div><p>Reaches Mooheau Bus Terminal in 8 hours</p><p>Started from Mooheau Bus Terminal at 7:05 AM</p><p>Last stop at Waiakea Uka Gym</p></div></div>
<div class="stops">
<stop-row name="Mooheau Bus Terminal" time="7:05 AM">(Kamehameha Avenue)</stop-row>
<stop-row name="Aupuni Center" time="7:15 AM">(Aupuni Street, bus shelter)</stop-row>
<stop-row name="Hilo Shopping Center" time="7:18 AM">(Kilauea Avenue, across shopping center, bus sign)</stop-row>
<stop-row name="University of Hawaii Hilo" time="7:20 AM">*(Kapiolani Street bus shelter &amp; Lanikaula St bus sign)</stop-row>
</div>`);

define('bus-app',()=>`
<style>
:host{display:grid;grid-template:1640px/503px 1857px;overflow:hidden}
side-bar{grid-area:1/1}city-map,.over{grid-area:1/2}
.over{display:flex;flex-direction:column;justify-content:flex-end;padding:0 25px 0 26px;z-index:1;gap:25.500px}
</style>
<side-bar></side-bar><city-map></city-map><div class="over"><locate-button></locate-button><route-panel></route-panel></div>`);
</script>
</body>
</html>
